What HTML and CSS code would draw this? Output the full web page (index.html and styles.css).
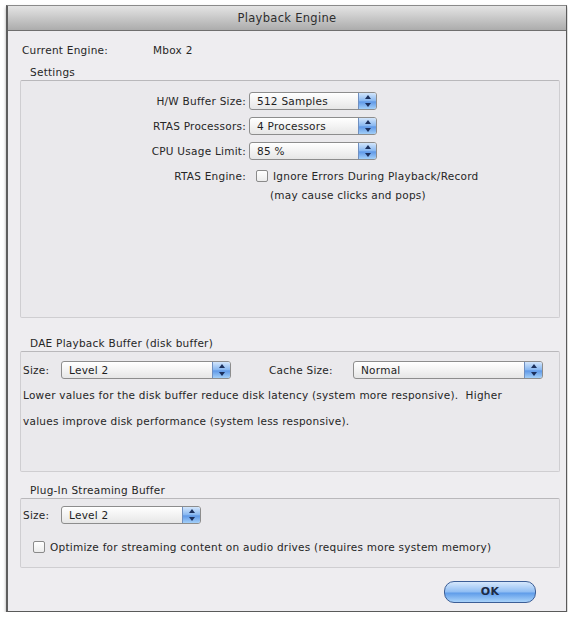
FILE: index.html
```html
<!DOCTYPE html>
<html>
<head>
<meta charset="utf-8">
<link rel="stylesheet" href="styles.css">
</head>
<body>
<div class="window">
  <div class="titlebar">Playback Engine</div>
  <div class="content">
    <div class="engine-row">
      <span class="engine-label">Current Engine:</span>
      <span class="engine-value">Mbox 2</span>
    </div>

    <div class="group-title settings-title">Settings</div>
    <div class="group settings">
      <div class="form-row">
        <span class="form-label">H/W Buffer Size:</span>
        <div class="select sel-settings"><span class="sel-text">512 Samples</span><span class="stepper"></span></div>
      </div>
      <div class="form-row">
        <span class="form-label">RTAS Processors:</span>
        <div class="select sel-settings"><span class="sel-text">4 Processors</span><span class="stepper"></span></div>
      </div>
      <div class="form-row">
        <span class="form-label">CPU Usage Limit:</span>
        <div class="select sel-settings"><span class="sel-text">85 %</span><span class="stepper"></span></div>
      </div>
      <div class="form-row engine">
        <span class="form-label">RTAS Engine:</span>
        <span class="checkbox"></span>
        <span class="check-text">Ignore Errors During Playback/Record</span>
      </div>
      <div class="note">(may cause clicks and pops)</div>
    </div>

    <div class="group-title dae-title">DAE Playback Buffer (disk buffer)</div>
    <div class="group dae">
      <div class="size-row">
        <span class="size-label">Size:</span>
        <div class="select sel-dae"><span class="sel-text">Level 2</span><span class="stepper"></span></div>
        <span class="cache-label">Cache Size:</span>
        <div class="select sel-cache"><span class="sel-text">Normal</span><span class="stepper"></span></div>
      </div>
      <p class="desc first">Lower values for the disk buffer reduce disk latency (system more responsive).&nbsp; Higher</p>
      <p class="desc">values improve disk performance (system less responsive).</p>
    </div>

    <div class="group-title plug-title">Plug-In Streaming Buffer</div>
    <div class="group plug">
      <div class="size-row">
        <span class="size-label">Size:</span>
        <div class="select sel-plug"><span class="sel-text">Level 2</span><span class="stepper"></span></div>
      </div>
      <div class="opt-row">
        <span class="checkbox"></span>
        <span class="check-text">Optimize for streaming content on audio drives (requires more system memory)</span>
      </div>
    </div>

    <div class="button-row">
      <div class="ok-button">OK</div>
    </div>
  </div>
</div>
</body>
</html>
```

FILE: styles.css
```css
html, body {
  margin: 0;
  padding: 0;
  background: #ffffff;
}
body {
  font-family: "DejaVu Sans", "Liberation Sans", sans-serif;
  font-size: 10.5px;
  letter-spacing: 0.25px;
  color: #262626;
}
.window {
  margin: 5px 0 0 6px;
  width: 558px;
  height: 605px;
  border: 1px solid #5a5a5a;
  border-left: 2px solid #5e5e5e;
  border-top-color: #8a8a8a;
  background: #eeedf0;
  box-shadow: 0 2px 3px rgba(0,0,0,0.35);
  display: flex;
  flex-direction: column;
}
.titlebar {
  height: 24px;
  line-height: 24px;
  text-align: center;
  font-size: 11.5px;
  letter-spacing: 0.3px;
  color: #2e2e2e;
  background: linear-gradient(#e4e4e4, #c8c8c8 50%, #acacac);
  border-bottom: 1px solid #6f6f6f;
}
.content {
  flex: 1;
  padding: 0 6px 0 12px;
  display: flex;
  flex-direction: column;
}
.engine-row {
  margin-top: 12px;
  height: 14px;
  line-height: 14px;
  display: flex;
  padding-left: 2px;
}
.engine-label { width: 131px; }
.group-title {
  padding-left: 10px;
  height: 14px;
  line-height: 14px;
  margin-top: 10px;
}
.settings-title { margin-top: 8px; }
.group {
  margin-top: 1px;
  border: 1px solid #cfced1;
  border-top-color: #b9b8bb;
  background: #eae9ec;
  border-radius: 2px;
}
.settings {
  height: 238px;
  padding-top: 11px;
  box-sizing: border-box;
}
.form-row {
  display: flex;
  align-items: center;
  height: 18px;
  margin-bottom: 7px;
}
.form-label {
  width: 228px;
  text-align: right;
  padding-right: 3px;
  box-sizing: border-box;
}
.form-row.engine { margin-bottom: 3px; margin-top: 0; }
.note {
  padding-left: 249px;
  height: 14px;
  line-height: 14px;
}
.select {
  position: relative;
  height: 18px;
  border: 1px solid #8d8d8d;
  border-radius: 3px;
  background: linear-gradient(#ffffff, #f3f3f3 50%, #e6e6e6);
  box-shadow: inset 0 1px 0 #fff;
  display: flex;
  align-items: center;
  box-sizing: border-box;
}
.sel-text {
  flex: 1;
  padding-left: 7px;
  color: #1e1e1e;
}
.stepper {
  width: 18px;
  height: 100%;
  border-radius: 0 2px 2px 0;
  background: linear-gradient(#d3e6fc, #86b6f0 50%, #5f98e7 55%, #a3cff8);
  border-left: 1px solid #6f8fc0;
  position: relative;
  box-sizing: border-box;
}
.stepper::before, .stepper::after {
  content: "";
  position: absolute;
  left: 50%;
  width: 0;
  height: 0;
  margin-left: -3px;
  border-left: 3px solid transparent;
  border-right: 3px solid transparent;
}
.stepper::before {
  top: 2px;
  border-bottom: 4px solid #1b2f5c;
}
.stepper::after {
  bottom: 2px;
  border-top: 4px solid #1b2f5c;
}
.sel-settings { width: 128px; }
.checkbox {
  width: 12px;
  height: 12px;
  border: 1px solid #8a8a8a;
  border-radius: 2px;
  background: linear-gradient(#ffffff, #ececec);
  box-sizing: border-box;
  margin-right: 5px;
  flex: none;
}
.engine .checkbox { margin-left: 7px; }
.dae-title { margin-top: 18px; }
.dae {
  height: 121px;
  padding: 9px 0 0 2px;
  box-sizing: border-box;
}
.size-row {
  display: flex;
  align-items: center;
  height: 18px;
}
.size-label { width: 38px; }
.sel-dae { width: 170px; }
.cache-label { margin-left: 38px; width: 84px; }
.sel-cache { width: 190px; }
.desc {
  margin: 0;
  height: 26px;
  line-height: 26px;
}
.desc.first { margin-top: 3px; }
.plug-title { margin-top: 11px; }
.plug {
  height: 70px;
  padding: 7px 0 0 2px;
  box-sizing: border-box;
}
.sel-plug { width: 140px; }
.opt-row {
  display: flex;
  align-items: center;
  margin-top: 17px;
  padding-left: 10px;
}
.button-row {
  display: flex;
  justify-content: flex-end;
  padding-right: 24px;
  margin-top: 13px;
}
.ok-button {
  width: 90px;
  height: 20px;
  line-height: 20px;
  text-align: center;
  font-weight: bold;
  font-size: 11px;
  color: #1c2a44;
  border: 1px solid #3c5e96;
  border-radius: 10px;
  background: linear-gradient(#d6e8fc, #8fbdf3 50%, #5f9ce9 55%, #a9d3fa);
}
```
